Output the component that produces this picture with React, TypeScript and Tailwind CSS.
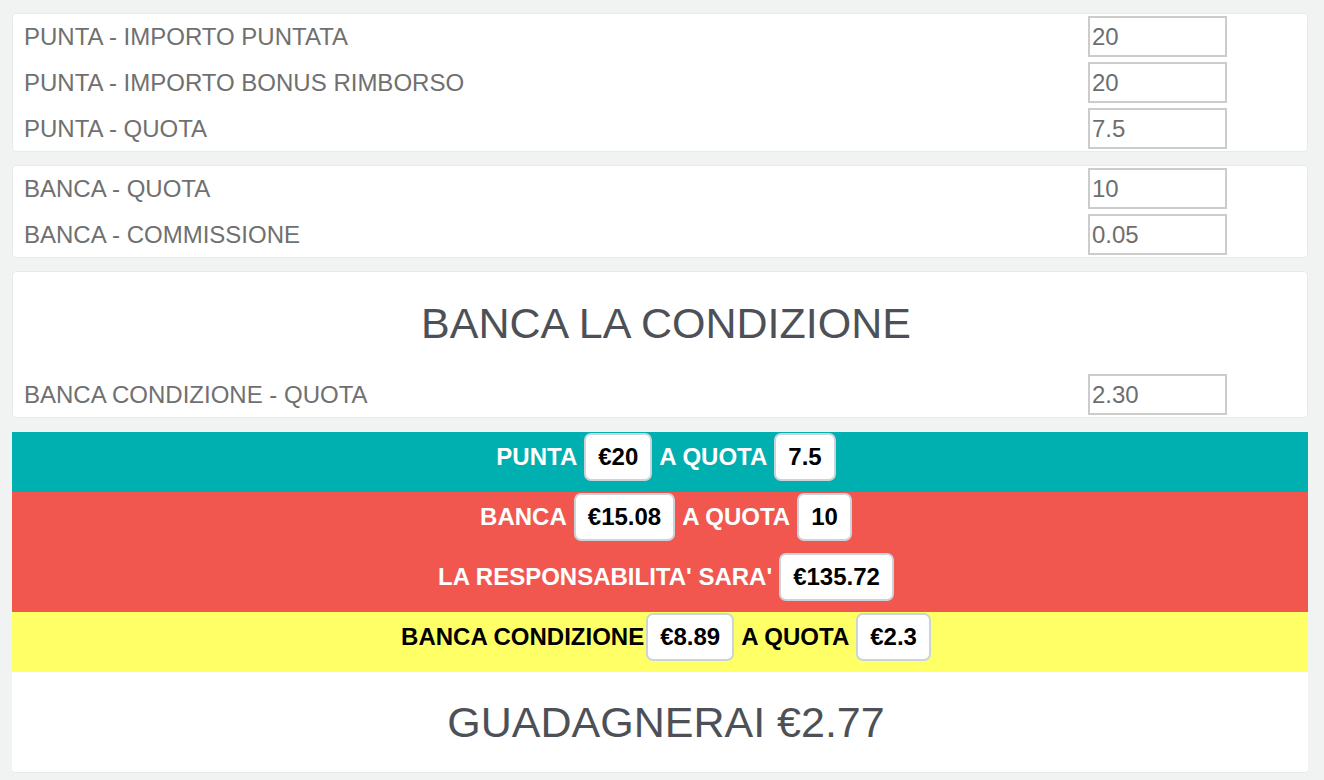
import React from "react";

const font = { fontFamily: '"Liberation Sans", Arial, sans-serif' };

type Field = { label: string; value: string };

const FieldRow: React.FC<Field> = ({ label, value }) => (
  <div className="flex items-center h-[41px]">
    <div className="flex-1 pl-[11px] text-[24px] text-[#707070]">{label}</div>
    <div className="w-[219px]">
      <input
        readOnly
        value={value}
        className="w-[139px] h-[41px] border-2 border-[#cccccc] bg-white px-[2px] text-[24px] text-[#6e6e6e] outline-none"
        style={font}
      />
    </div>
  </div>
);

const Badge: React.FC<{ children: React.ReactNode }> = ({ children }) => (
  <span className="h-[48px] flex items-center px-[12px] bg-white border-2 border-[#cbd3db] rounded-[7px] text-black">
    {children}
  </span>
);

const Band: React.FC<{ color: string; children: React.ReactNode }> = ({ color, children }) => (
  <div className={`h-[60px] flex justify-center items-start pt-[1px] pl-3 ${color}`}>
    <div className="flex items-center h-[47px] font-bold text-[24px]">{children}</div>
  </div>
);

const App: React.FC = () => {
  return (
    <div className="min-h-[780px] bg-[#f1f2f2] pl-3 pr-4 pt-[13px] pb-2 flex flex-col gap-[13px]" style={font}>
      {/* punta */}
      <div className="bg-white border border-[#e8e9e9] rounded-[4px] py-[2px] flex flex-col gap-[5px]">
        <FieldRow label="PUNTA - IMPORTO PUNTATA" value="20" />
        <FieldRow label="PUNTA - IMPORTO BONUS RIMBORSO" value="20" />
        <FieldRow label="PUNTA - QUOTA" value="7.5" />
      </div>

      {/* banca */}
      <div className="bg-white border border-[#e8e9e9] rounded-[4px] py-[2px] flex flex-col gap-[5px]">
        <FieldRow label="BANCA - QUOTA" value="10" />
        <FieldRow label="BANCA - COMMISSIONE" value="0.05" />
      </div>

      {/* condizione */}
      <div className="bg-white border border-[#e8e9e9] rounded-[4px] pb-[2px]">
        <div className="h-[102px] flex items-center justify-center pl-3 text-[43px] text-[#4d5157]">
          BANCA LA CONDIZIONE
        </div>
        <FieldRow label="BANCA CONDIZIONE - QUOTA" value="2.30" />
      </div>

      {/* risultato */}
      <div className="mt-px bg-white rounded-b-[4px] border-b border-[#e8e9e9]">
        <Band color="bg-[#00afaf] text-white">
          <span>PUNTA</span>
          <span className="mx-[7px]"><Badge>€20</Badge></span>
          <span>A QUOTA</span>
          <span className="ml-[7px]"><Badge>7.5</Badge></span>
        </Band>
        <div className="bg-[#f1574f] text-white">
          <Band color="">
            <span>BANCA</span>
            <span className="mx-[7px]"><Badge>€15.08</Badge></span>
            <span>A QUOTA</span>
            <span className="ml-[7px]"><Badge>10</Badge></span>
          </Band>
          <Band color="">
            <span>LA RESPONSABILITA' SARA'</span>
            <span className="ml-[7px]"><Badge>€135.72</Badge></span>
          </Band>
        </div>
        <Band color="bg-[#ffff66] text-black">
          <span>BANCA CONDIZIONE</span>
          <span className="ml-[2px] mr-[7px]"><Badge>€8.89</Badge></span>
          <span>A QUOTA</span>
          <span className="ml-[7px]"><Badge>€2.3</Badge></span>
        </Band>
        <div className="h-[100px] flex items-center justify-center pl-3 text-[43px] text-[#4d5157]">
          GUADAGNERAI €2.77
        </div>
      </div>
    </div>
  );
};

export default App;
